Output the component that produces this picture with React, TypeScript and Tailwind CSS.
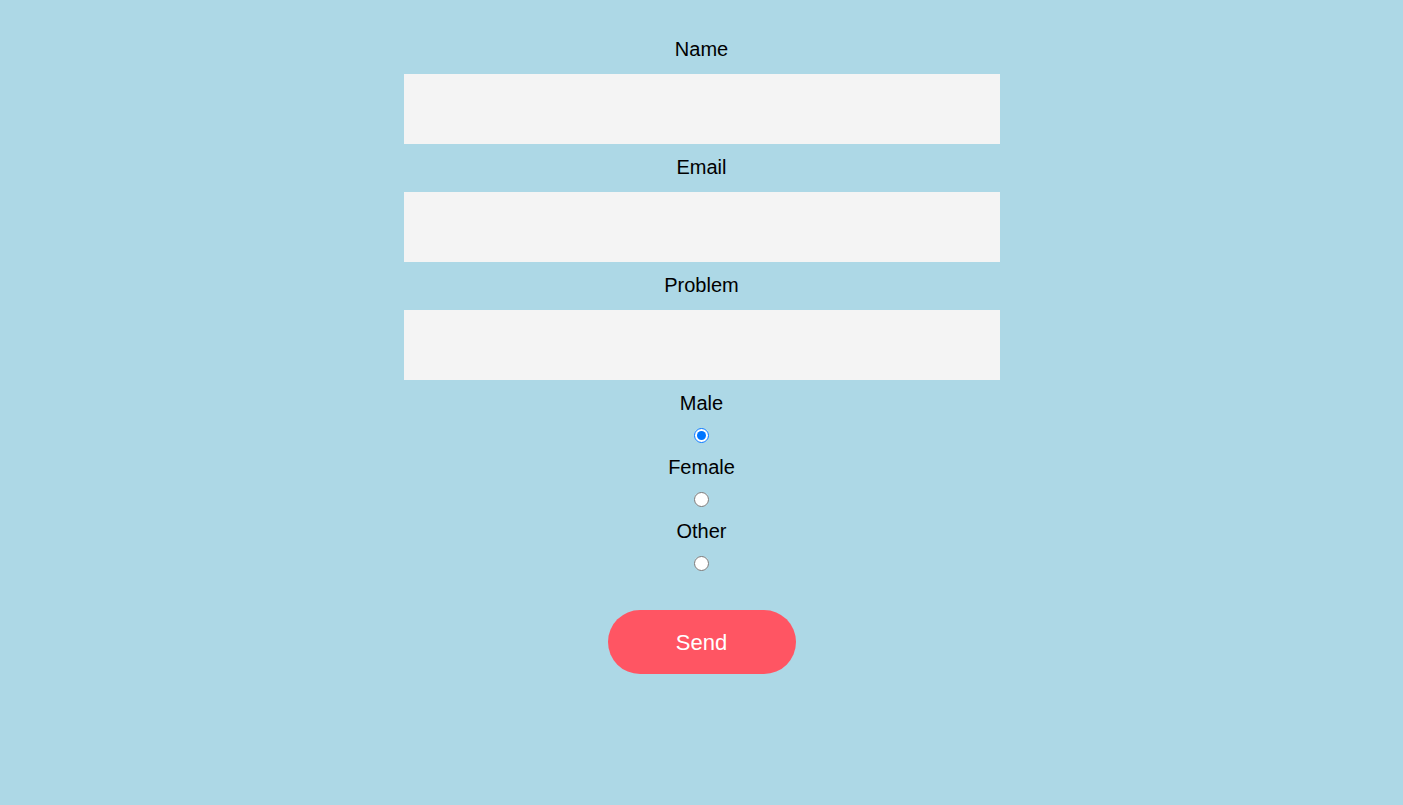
export default function App() {
  const fields = ["Name", "Email", "Problem"];
  const genders = ["Male", "Female", "Other"];

  return (
    <div
      className="min-h-screen w-full bg-[#add8e6] text-black flex flex-col items-center pt-[26px]"
      style={{ fontFamily: '"Liberation Sans", Arial, sans-serif' }}
    >
      <form className="flex flex-col items-center w-[596px]" onSubmit={e => e.preventDefault()}>
        {fields.map(f => (
          <div key={f} className="flex flex-col items-center w-full">
            <label className="block text-[20px] leading-[23px] pt-[12px] pb-[13px]">{f}</label>
            <input type="text" className="w-full h-[70px] bg-[#f4f4f4] outline-none px-3 text-[18px]" />
          </div>
        ))}
        <div className="flex flex-col items-center pt-[12px]">
          {genders.map((g, i) => (
            <div key={g} className="flex flex-col items-center">
              <label className="block text-[20px] leading-[23px]">{g}</label>
              <input
                type="radio"
                name="gender"
                defaultChecked={i === 0}
                className="w-[15px] h-[15px] mt-[13px] mb-[13px]"
              />
            </div>
          ))}
        </div>
        <button
          type="submit"
          className="mt-[26px] w-[188px] h-[64px] rounded-full bg-[#ff5563] text-white text-[22px]"
        >
          Send
        </button>
      </form>
    </div>
  );
}
